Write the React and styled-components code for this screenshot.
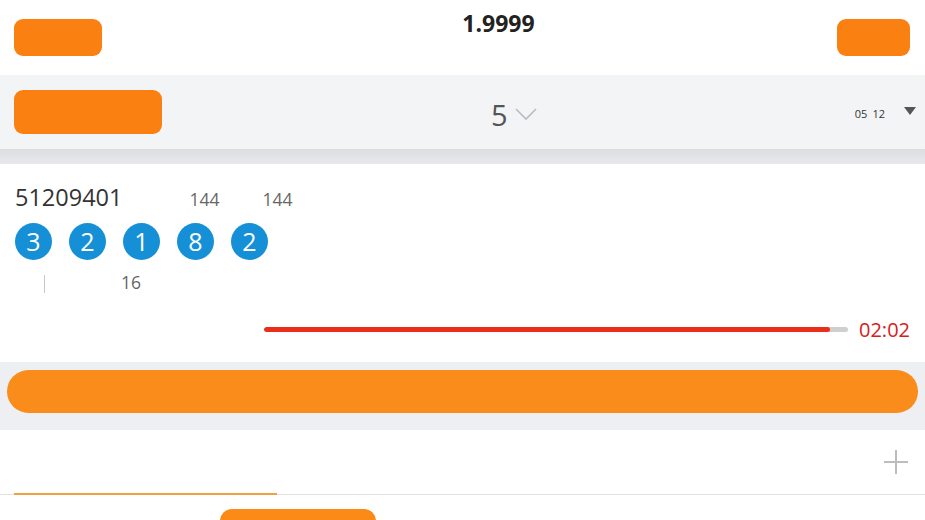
import React from 'react';
import styled, { createGlobalStyle } from 'styled-components';

const GlobalStyle = createGlobalStyle`
  html, body {
    margin: 0;
    padding: 0;
    background: #ffffff;
    font-family: "Open Sans", "Noto Sans", sans-serif;
    overflow: hidden;
  }
`;

const balls = [3, 2, 1, 8, 2];
const progress = 97;

const App = () => {
    return (
        <Page>
            <GlobalStyle />
            <Header>
                <OrangeButton w={88} h={37} />
                <Title>1.9999</Title>
                <OrangeButton w={73} h={37} />
            </Header>
            <Toolbar>
                <OrangeButton w={148} h={44} />
                <Selector>
                    <BigNum>5</BigNum>
                    <svg width="24" height="14" viewBox="0 0 24 14">
                        <path d="M2 2 L12 12 L22 2" fill="none" stroke="#b9bcc0" strokeWidth="1.6" />
                    </svg>
                </Selector>
                <DateBox>
                    <span>05</span>
                    <span>12</span>
                    <svg width="12" height="8" viewBox="0 0 12 8">
                        <path d="M0 0 L12 0 L6 8 Z" fill="#555" />
                    </svg>
                </DateBox>
            </Toolbar>
            <ShadowBand />
            <Draw>
                <InfoRow>
                    <Issue>51209401</Issue>
                    <Small gap={67}>144</Small>
                    <Small gap={43}>144</Small>
                </InfoRow>
                <BallRow>
                    {balls.map((n, i) => (
                        <Ball key={i}>{n}</Ball>
                    ))}
                </BallRow>
                <SumRow>
                    <Divider />
                    <Small gap={76}>16</Small>
                </SumRow>
                <TimerRow>
                    <Track>
                        <Fill style={{ width: `${progress}%` }} />
                    </Track>
                    <Time>02:02</Time>
                </TimerRow>
            </Draw>
            <PillBand>
                <Pill />
            </PillBand>
            <Tabs>
                <TabUnderline />
                <Plus>
                    <svg width="24" height="24" viewBox="0 0 24 24">
                        <path d="M12 0 V24 M0 12 H24" stroke="#bdbdbd" strokeWidth="2" />
                    </svg>
                </Plus>
            </Tabs>
            <Footer>
                <BottomButton />
            </Footer>
        </Page>
    );
};

const Page = styled.div`
    width: 925px;
    height: 520px;
    display: flex;
    flex-direction: column;
    overflow: hidden;

    & > * {
        flex-shrink: 0;
    }
`;

const Header = styled.div`
    height: 75px;
    box-sizing: border-box;
    padding: 0 15px 0 14px;
    display: flex;
    justify-content: space-between;
    align-items: flex-start;
    background: #ffffff;

    & > div:first-child,
    & > div:last-child {
        margin-top: 19px;
    }
`;

const OrangeButton = styled.div`
    width: ${(p) => p.w}px;
    height: ${(p) => p.h}px;
    border-radius: 9px;
    background: #fb8012;
    flex-shrink: 0;
`;

const Title = styled.div`
    margin-top: 7px;
    margin-left: 58px;
    font-size: 23px;
    font-weight: 700;
    color: #222;
`;

const Toolbar = styled.div`
    height: 74px;
    box-sizing: border-box;
    padding: 0 9px 0 14px;
    display: flex;
    align-items: center;
    background: #f3f4f6;
`;

const Selector = styled.div`
    display: flex;
    align-items: center;
    gap: 6px;
    margin-left: 329px;
    margin-top: 4px;
`;

const BigNum = styled.span`
    font-size: 29px;
    color: #555;
    line-height: 1;
`;

const DateBox = styled.div`
    margin-left: auto;
    display: flex;
    align-items: center;
    gap: 5px;
    font-size: 11px;
    color: #333;
    margin-top: 3px;

    svg {
        margin-left: 14px;
        margin-top: -6px;
    }
`;

const ShadowBand = styled.div`
    height: 15px;
    background: linear-gradient(#dcdde0, #e8e9ec);
`;

const Draw = styled.div`
    height: 198px;
    box-sizing: border-box;
    padding: 18px 15px 0 15px;
    display: flex;
    flex-direction: column;
`;

const InfoRow = styled.div`
    display: flex;
    align-items: baseline;
    height: 30px;
`;

const Issue = styled.div`
    font-size: 23.5px;
    color: #333;
    line-height: 30px;
`;

const Small = styled.div`
    margin-left: ${(p) => p.gap}px;
    font-size: 17.5px;
    color: #666;
`;

const BallRow = styled.div`
    display: flex;
    gap: 17px;
    margin-top: 11px;
`;

const Ball = styled.div`
    width: 37px;
    height: 37px;
    border-radius: 50%;
    background: #1590d6;
    color: #ffffff;
    font-size: 25px;
    display: flex;
    align-items: center;
    justify-content: center;
    line-height: 1;
`;

const SumRow = styled.div`
    display: flex;
    align-items: center;
    height: 24px;
    margin-top: 10px;
    padding-left: 29px;
`;

const Divider = styled.div`
    width: 1px;
    height: 18px;
    background: #c8c8c8;
    margin-top: 4px;
`;

const TimerRow = styled.div`
    display: flex;
    align-items: center;
    justify-content: flex-end;
    gap: 11px;
    margin-top: 22px;
`;

const Track = styled.div`
    width: 584px;
    height: 5px;
    border-radius: 3px;
    background: #cfcfcf;
    overflow: hidden;
`;

const Fill = styled.div`
    height: 100%;
    border-radius: 3px;
    background: #ea2e1a;
`;

const Time = styled.div`
    font-size: 20px;
    color: #d4201c;
`;

const PillBand = styled.div`
    height: 68px;
    box-sizing: border-box;
    padding: 8px 7px 0 7px;
    background: #eeeff3;
`;

const Pill = styled.div`
    height: 43px;
    border-radius: 22px;
    background: #f98c1a;
`;

const Tabs = styled.div`
    height: 65px;
    box-sizing: border-box;
    border-bottom: 1px solid #e2e2e2;
    display: flex;
    align-items: flex-end;
    padding: 0 17px 0 14px;
`;

const TabUnderline = styled.div`
    width: 263px;
    height: 2px;
    background: #f0a040;
    margin-bottom: -1px;
`;

const Plus = styled.div`
    margin-left: auto;
    align-self: center;
    display: flex;
`;

const Footer = styled.div`
    padding: 14px 0 0 220px;
`;

const BottomButton = styled.div`
    width: 156px;
    height: 40px;
    border-radius: 12px;
    background: #fb8a16;
`;

export default App;
